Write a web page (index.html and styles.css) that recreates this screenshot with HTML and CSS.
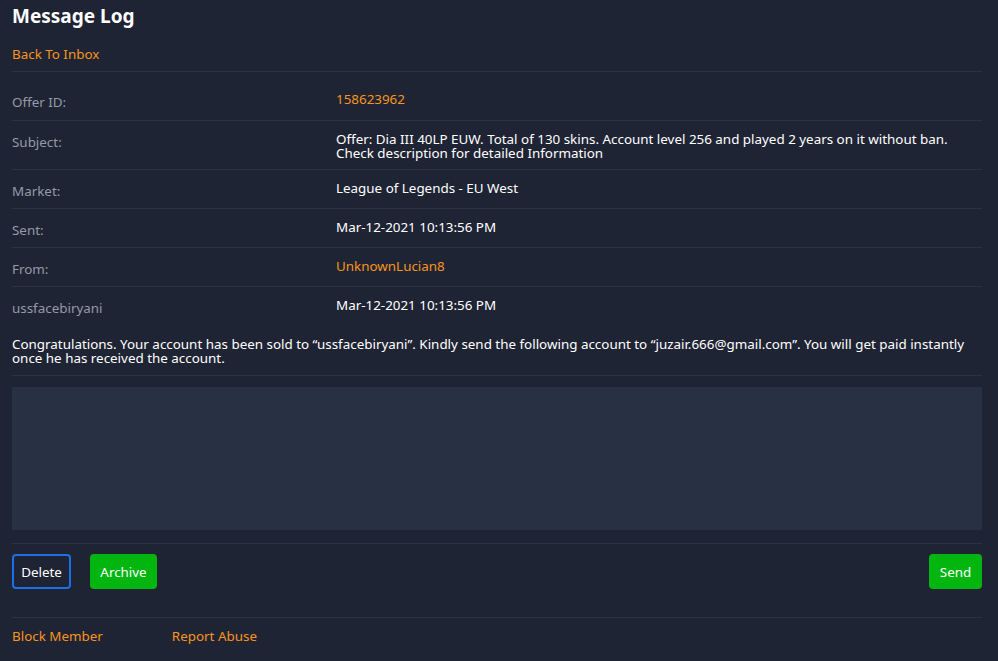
FILE: index.html
```html
<!DOCTYPE html>
<html lang="en">
<head>
    <meta charset="UTF-8">
    <meta name="viewport" content="width=device-width, initial-scale=1.0">
    <title>Message Log</title>
    <link rel="stylesheet" href="styles.css">
</head>
<body>
    <div class="page">
        <h1>Message Log</h1>
        <a class="link back" href="#">Back To Inbox</a>

        <div class="details">
            <div class="row row-first">
                <div class="label">Offer ID:</div>
                <div class="value"><a class="link" href="#">158623962</a></div>
            </div>
            <div class="row row-multi">
                <div class="label">Subject:</div>
                <div class="value">Offer: Dia III 40LP EUW. Total of 130 skins. Account level 256 and played 2 years on it without ban. Check description for detailed Information</div>
            </div>
            <div class="row">
                <div class="label">Market:</div>
                <div class="value">League of Legends - EU West</div>
            </div>
            <div class="row">
                <div class="label">Sent:</div>
                <div class="value">Mar-12-2021 10:13:56 PM</div>
            </div>
            <div class="row">
                <div class="label">From:</div>
                <div class="value"><a class="link" href="#">UnknownLucian8</a></div>
            </div>
            <div class="row">
                <div class="label">ussfacebiryani</div>
                <div class="value">Mar-12-2021 10:13:56 PM</div>
            </div>
        </div>

        <p class="message">Congratulations. Your account has been sold to “ussfacebiryani”. Kindly send the following account to “juzair.666@gmail.com”. You will get paid instantly once he has received the account.</p>

        <div class="reply">
            <textarea class="reply-box"></textarea>
        </div>

        <div class="actions">
            <button class="btn btn-outline">Delete</button>
            <button class="btn btn-green btn-archive">Archive</button>
            <button class="btn btn-green btn-send">Send</button>
        </div>

        <div class="footer">
            <a class="link" href="#">Block Member</a>
            <a class="link" href="#">Report Abuse</a>
        </div>
    </div>
</body>
</html>
```

FILE: styles.css
```css
body {
    margin: 0;
    background-color: #1f2434;
    font-family: "Noto Sans", Arial, sans-serif;
    font-size: 13.4px;
    color: #ffffff;
}
.page {
    padding: 0 16px 0 12px;
}
h1 {
    margin: 0;
    padding-top: 4px;
    font-size: 19px;
    font-weight: bold;
    line-height: 24px;
}
.link {
    color: #f7941d;
    text-decoration: none;
}
.back {
    display: block;
    margin-top: 17px;
    padding-bottom: 8px;
    border-bottom: 1px solid #2c3244;
}
.row {
    display: grid;
    grid-template-columns: 324px 1fr;
    padding: 11px 0 10px;
    border-bottom: 1px solid #2c3244;
    line-height: 14px;
}
.row-first {
    padding: 20px 0 11px;
}
.row-multi {
    padding-bottom: 9px;
}
.row:last-child {
    border-bottom: none;
}
.label {
    color: #959aa5;
    padding-top: 3px;
}
.message {
    margin: 0;
    padding: 12px 0 10px;
    line-height: 14px;
    border-bottom: 1px solid #2c3244;
}
.reply {
    padding: 11px 0 13px;
    border-bottom: 1px solid #2c3244;
}
.reply-box {
    display: block;
    width: 100%;
    height: 143px;
    box-sizing: border-box;
    margin: 0;
    background-color: #283044;
    border: none;
    resize: none;
}
.actions {
    display: flex;
    gap: 19px;
    padding: 10px 0 28px;
    border-bottom: 1px solid #2c3244;
}
.btn {
    width: 59px;
    height: 35px;
    padding: 0;
    border-radius: 4px;
    border: none;
    font-family: inherit;
    font-size: 13.4px;
    color: #ffffff;
}
.btn-outline {
    background: transparent;
    border: 2px solid #1d6fe5;
}
.btn-green {
    background-color: #02b50f;
}
.btn-archive {
    width: 67px;
}
.btn-send {
    width: 53px;
    margin-left: auto;
}
.footer {
    display: flex;
    gap: 69px;
    padding: 9px 0;
}
```
